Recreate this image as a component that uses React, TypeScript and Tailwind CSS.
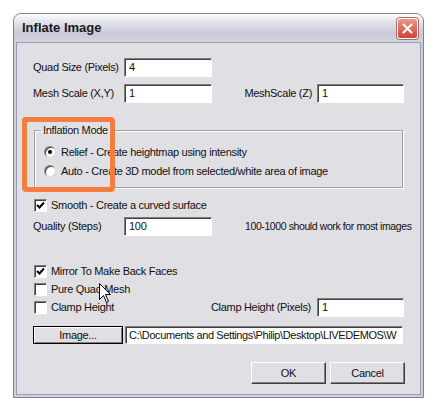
import React from "react";

const sunken =
  "bg-white border border-t-[#7f7f7f] border-l-[#7f7f7f] border-r-white border-b-white shadow-[inset_1px_1px_0_#404040]";

const raised =
  "bg-[#e0dfe3] border border-t-white border-l-white border-r-[#404040] border-b-[#404040] shadow-[inset_-1px_-1px_0_#808080]";

const TextBox = ({ value, className = "" }: { value: string; className?: string }) => (
  <div className={`shrink-0 h-[19px] flex items-center pl-[4px] overflow-hidden whitespace-nowrap ${sunken} ${className}`}>
    {value}
  </div>
);

const CheckBox = ({ checked, label }: { checked?: boolean; label: string }) => (
  <div className="flex items-center h-[18px]">
    <div className={`shrink-0 w-[13px] h-[13px] ml-[1px] flex items-center justify-center ${sunken}`}>
      {checked && (
        <svg viewBox="0 0 9 9" className="w-[9px] h-[9px]">
          <path d="M1 4 L3.5 6.5 L8 1.5" stroke="#000" strokeWidth="2" fill="none" />
        </svg>
      )}
    </div>
    <span className="ml-[4px] whitespace-nowrap">{label}</span>
  </div>
);

const Radio = ({ checked, label }: { checked?: boolean; label: string }) => (
  <div className="flex items-center h-[14px]">
    <div className="shrink-0 w-[12px] h-[12px] rounded-full bg-white border border-t-[#808080] border-l-[#808080] border-r-[#d8d8d8] border-b-[#d8d8d8] shadow-[inset_1px_1px_0_#404040] flex items-center justify-center">
      {checked && <div className="w-[4px] h-[4px] rounded-full bg-black" />}
    </div>
    <span className="ml-[5px] whitespace-nowrap">{label}</span>
  </div>
);

export default function App() {
  return (
    <div className="relative w-[439px] h-[417px] bg-white pt-[13px] pl-[13px] font-['Liberation_Sans',Arial,sans-serif] text-[11px] tracking-[-0.3px] text-[#111]">
      <div className="w-[411px] h-[385px] flex flex-col rounded-t-[8px] border border-[#7e7f99] bg-[#cfcfdc] px-[2px] pb-[2px]">
        {/* title bar */}
        <div className="h-[28px] -mx-[2px] rounded-t-[7px] flex items-center pl-[8px] pr-[5px] bg-[linear-gradient(#fdfdfe_0%,#e6e6ee_25%,#c9c9d9_70%,#d4d4e0_100%)]">
          <span className="text-[13px] font-bold tracking-normal text-[#1a1a1a]">Inflate Image</span>
          <div className="ml-auto w-[21px] h-[21px] rounded-[3px] border border-white bg-[linear-gradient(#e9998a,#c8463a)] flex items-center justify-center shadow-[0_0_0_1px_#b06a66]">
            <svg viewBox="0 0 11 11" className="w-[11px] h-[11px]">
              <path d="M1.5 1.5 L9.5 9.5 M9.5 1.5 L1.5 9.5" stroke="#fff" strokeWidth="2" strokeLinecap="round" />
            </svg>
          </div>
        </div>

        {/* body */}
        <div className="flex-1 bg-[#e0dfe3] border border-[#9c9cb2] pl-[16px] pr-[16px] flex flex-col">
          <div className="flex items-center mt-[15px]">
            <span className="w-[91px] shrink-0">Quad Size (Pixels)</span>
            <TextBox value="4" className="w-[88px]" />
          </div>

          <div className="flex items-center mt-[7px]">
            <span className="w-[91px] shrink-0">Mesh Scale (X,Y)</span>
            <TextBox value="1" className="w-[88px]" />
            <span className="ml-auto mr-[5px]">MeshScale (Z)</span>
            <TextBox value="1" className="w-[87px]" />
          </div>

          <fieldset className="mt-[20px] ml-[1px] mr-[1px] border border-[#a0a0a0] shadow-[inset_1px_1px_0_#fff,1px_1px_0_#fff] pl-[9px] pb-[9px]">
            <legend className="ml-[-3px] px-[2px] leading-[14px]">Inflation Mode</legend>
            <div className="mt-[8px]">
              <Radio checked label="Relief - Create heightmap using intensity" />
            </div>
            <div className="mt-[5px]">
              <Radio label="Auto - Create 3D model from selected/white area of image" />
            </div>
          </fieldset>

          <div className="mt-[8px]">
            <CheckBox checked label="Smooth - Create a curved surface" />
          </div>

          <div className="flex items-center mt-[3px]">
            <span className="w-[91px] shrink-0">Quality (Steps)</span>
            <TextBox value="100" className="w-[88px]" />
            <span className="ml-[33px] whitespace-nowrap text-[10.5px] tracking-[-0.4px]">100-1000 should work for most images</span>
          </div>

          <div className="mt-[26px]">
            <CheckBox checked label="Mirror To Make Back Faces" />
          </div>
          <CheckBox label="Pure Quad Mesh" />
          <div className="flex items-center">
            <CheckBox label="Clamp Height" />
            <span className="ml-auto mr-[6px]">Clamp Height (Pixels)</span>
            <TextBox value="1" className="w-[87px]" />
          </div>

          <div className="flex items-center mt-[9px]">
            <div className="shrink-0 w-[90px] h-[18px] border border-black bg-[#e0dfe3] flex items-center justify-center shadow-[inset_1px_1px_0_#fff,inset_-1px_-1px_0_#808080]">
              Image...
            </div>
            <div className={`ml-[2px] mr-[1px] flex-1 min-w-0 h-[18px] flex items-center pl-[3px] overflow-hidden whitespace-nowrap tracking-[-0.4px] ${sunken}`}>
              C:\Documents and Settings\Philip\Desktop\LIVEDEMOS\W
            </div>
          </div>

          <div className="flex justify-end gap-[4px] mt-[18px] -mr-[1px]">
            <div className={`w-[75px] h-[22px] flex items-center justify-center ${raised}`}>OK</div>
            <div className={`w-[75px] h-[22px] flex items-center justify-center ${raised}`}>Cancel</div>
          </div>
        </div>
      </div>

      {/* orange highlight */}
      <div className="absolute left-[22px] top-[117px] w-[93px] h-[75px] border-[5px] border-[#f47d40] rounded-[4px]" />

      {/* mouse cursor */}
      <svg className="absolute left-[99px] top-[283px]" width="13" height="21" viewBox="0 0 13 21">
        <path d="M0.5 0.5 L0.5 16.5 L4.5 12.5 L7.5 19.5 L9.5 18.5 L6.5 11.5 L11.5 11.5 Z" fill="#fff" stroke="#000" strokeWidth="1" />
      </svg>
    </div>
  );
}
